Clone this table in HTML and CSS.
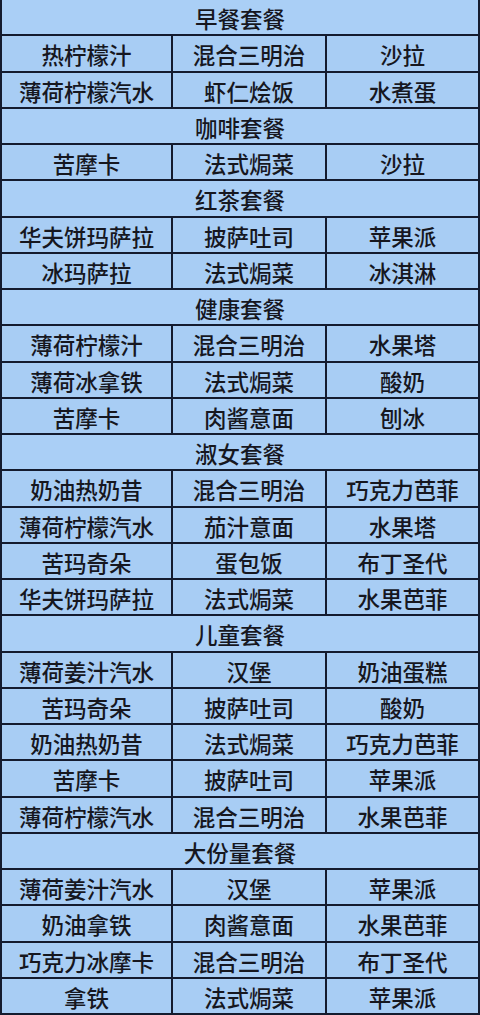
FILE: index.html
```html
<!DOCTYPE html>
<html lang="zh">
<head>
<meta charset="utf-8">
<link rel="stylesheet" href="styles.css">
</head>
<body>
<div class="menu">
  <div class="sec">早餐套餐</div>
  <div class="c">热柠檬汁</div><div class="c">混合三明治</div><div class="c">沙拉</div>
  <div class="c">薄荷柠檬汽水</div><div class="c">虾仁烩饭</div><div class="c">水煮蛋</div>
  <div class="sec">咖啡套餐</div>
  <div class="c">苦摩卡</div><div class="c">法式焗菜</div><div class="c">沙拉</div>
  <div class="sec">红茶套餐</div>
  <div class="c">华夫饼玛萨拉</div><div class="c">披萨吐司</div><div class="c">苹果派</div>
  <div class="c">冰玛萨拉</div><div class="c">法式焗菜</div><div class="c">冰淇淋</div>
  <div class="sec">健康套餐</div>
  <div class="c">薄荷柠檬汁</div><div class="c">混合三明治</div><div class="c">水果塔</div>
  <div class="c">薄荷冰拿铁</div><div class="c">法式焗菜</div><div class="c">酸奶</div>
  <div class="c">苦摩卡</div><div class="c">肉酱意面</div><div class="c">刨冰</div>
  <div class="sec">淑女套餐</div>
  <div class="c">奶油热奶昔</div><div class="c">混合三明治</div><div class="c">巧克力芭菲</div>
  <div class="c">薄荷柠檬汽水</div><div class="c">茄汁意面</div><div class="c">水果塔</div>
  <div class="c">苦玛奇朵</div><div class="c">蛋包饭</div><div class="c">布丁圣代</div>
  <div class="c">华夫饼玛萨拉</div><div class="c">法式焗菜</div><div class="c">水果芭菲</div>
  <div class="sec">儿童套餐</div>
  <div class="c">薄荷姜汁汽水</div><div class="c">汉堡</div><div class="c">奶油蛋糕</div>
  <div class="c">苦玛奇朵</div><div class="c">披萨吐司</div><div class="c">酸奶</div>
  <div class="c">奶油热奶昔</div><div class="c">法式焗菜</div><div class="c">巧克力芭菲</div>
  <div class="c">苦摩卡</div><div class="c">披萨吐司</div><div class="c">苹果派</div>
  <div class="c">薄荷柠檬汽水</div><div class="c">混合三明治</div><div class="c">水果芭菲</div>
  <div class="sec">大份量套餐</div>
  <div class="c">薄荷姜汁汽水</div><div class="c">汉堡</div><div class="c">苹果派</div>
  <div class="c">奶油拿铁</div><div class="c">肉酱意面</div><div class="c">水果芭菲</div>
  <div class="c">巧克力冰摩卡</div><div class="c">混合三明治</div><div class="c">布丁圣代</div>
  <div class="c">拿铁</div><div class="c">法式焗菜</div><div class="c">苹果派</div>
</div>
</body>
</html>
```

FILE: styles.css
```css
html, body {
  margin: 0;
  padding: 0;
  background: #a8cdf4;
}
body {
  width: 480px;
  height: 1015px;
  overflow: hidden;
}
.menu {
  box-sizing: border-box;
  width: 480px;
  display: grid;
  grid-template-columns: 171px 154px 1fr;
  grid-auto-rows: 36.25px;
  border-left: 2px solid #141b2e;
  background: #a8cdf4;
  font-family: "Noto Sans CJK SC", "Noto Sans", sans-serif;
  font-size: 22.5px;
  font-weight: 500;
  color: #16171f;
}
.c, .sec {
  box-sizing: border-box;
  border-right: 2px solid #141b2e;
  border-bottom: 2px solid #141b2e;
  display: flex;
  align-items: center;
  justify-content: center;
  padding-top: 2px;
  white-space: nowrap;
}
.sec {
  grid-column: 1 / -1;
  background: #aacff6;
}
```
